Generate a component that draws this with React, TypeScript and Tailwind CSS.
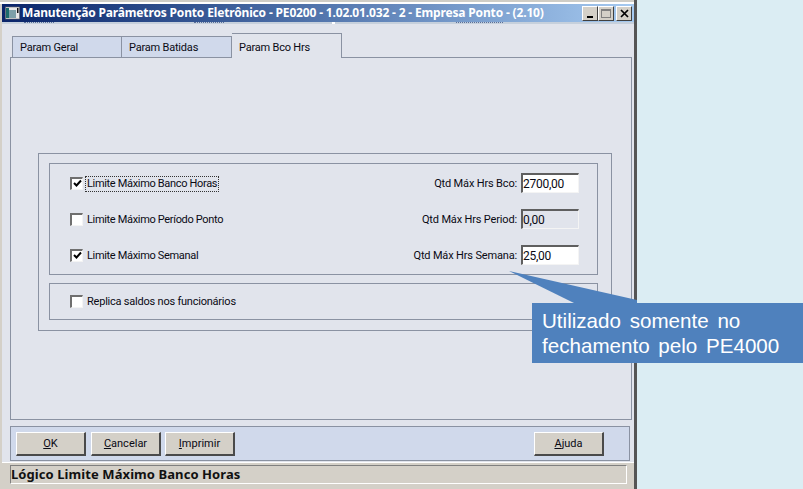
const ui = { fontFamily: 'Roboto, Tahoma, sans-serif' };
const bold = { fontFamily: '"Noto Sans", Tahoma, sans-serif' };

function Check({ checked }: { checked?: boolean }) {
  return (
    <span className="w-[13px] h-[13px] shrink-0 bg-white border-t-2 border-l-2 border-r border-b border-t-[#6f6f6f] border-l-[#6f6f6f] border-r-[#f4f4f4] border-b-[#f4f4f4] flex items-center justify-center">
      {checked && (
        <svg width="9" height="9" viewBox="0 0 9 9">
          <path d="M1 4 L3.5 6.5 L8 1.5" fill="none" stroke="#000" strokeWidth="2" />
        </svg>
      )}
    </span>
  );
}

function Row({ label, checked, focus, qty, value, disabled }: { label: string; checked?: boolean; focus?: boolean; qty: string; value: string; disabled?: boolean }) {
  return (
    <div className="flex items-center h-[20px]">
      <Check checked={checked} />
      <span className={`ml-[3px] mt-[2px] px-px leading-[14px] text-[11px] tracking-[-0.33px] text-[#0a0a14] ${focus ? 'outline-1 outline-dotted outline-[#333]' : ''}`}>{label}</span>
      <span className="ml-auto mt-[2px] text-[11px] tracking-[-0.16px] text-[#0a0a14] mr-[4px]">{qty}</span>
      <span className={`w-[58px] h-[20px] border-t-2 border-l-2 border-r border-b border-t-[#5f5f5f] border-l-[#5f5f5f] border-r-[#f4f4f4] border-b-[#f4f4f4] text-[12px] tracking-[-0.25px] leading-[19px] text-[#0a0a14] ${disabled ? 'bg-[#e1e4ec]' : 'bg-white'}`}>{value}</span>
    </div>
  );
}

function Btn({ children, className = '' }: { children: React.ReactNode; className?: string }) {
  return (
    <button className={`w-[70px] h-[24px] pt-[2px] bg-[#d4d0c8] border-t border-l border-t-white border-l-white border-r-2 border-b-2 border-r-[#4a4a4a] border-b-[#4a4a4a] text-[11px] text-[#0a0a14] flex items-center justify-center ${className}`}>
      {children}
    </button>
  );
}

function WinBtn({ children }: { children: React.ReactNode }) {
  return (
    <span className="w-[16px] h-[15px] bg-[#d4d0c8] border-t border-l border-t-white border-l-white border-r border-b border-r-[#404040] border-b-[#404040] flex items-center justify-center">
      {children}
    </span>
  );
}

export default function App() {
  return (
    <div className="relative w-[803px] h-[489px] overflow-hidden bg-[#dbedf3] flex" style={ui}>
      <div className="w-[637px] h-full flex flex-col border-r-[3px] border-r-[#555] bg-[#d4d0c8]">
        <div className="h-[4px] bg-white border-t-2 border-t-[#cfcdc6]" />
        <div className="flex-1 ml-[2px] flex flex-col bg-[#e1e4ec]">
          <div className="h-[18px] pl-[3px] pr-[2px] flex items-center bg-gradient-to-r from-[#0a246a] to-[#a6caf0]">
            <svg width="15" height="14" viewBox="0 0 15 14" className="shrink-0">
              <rect x="0.5" y="1" width="14" height="12" fill="#e8e8e8" stroke="#666" strokeWidth="0.6" />
              <rect x="1" y="2" width="3" height="10" fill="#1c6b6b" />
              <rect x="4" y="4" width="7" height="8" fill="#7da0a8" />
              <rect x="12" y="2" width="1.5" height="5" fill="#111" />
            </svg>
            <span className="ml-[2px] text-[12px] font-bold tracking-[-0.16px] text-white whitespace-nowrap" style={bold}>Manutenção Parâmetros Ponto Eletrônico - PE0200 - 1.02.01.032 - 2 - Empresa Ponto - (2.10)</span>
            <div className="ml-auto flex">
              <WinBtn><span className="w-[6px] h-[2px] bg-black mt-[8px]" /></WinBtn>
              <WinBtn><span className="w-[10px] h-[9px] border border-[#808080] border-t-2" /></WinBtn>
              <span className="w-[2px]" />
              <WinBtn>
                <svg width="9" height="9" viewBox="0 0 9 9"><path d="M1 1 L8 8 M8 1 L1 8" stroke="#000" strokeWidth="1.7" /></svg>
              </WinBtn>
            </div>
          </div>
          <div className="h-[2px] bg-[#c6d0dc] flex">
            <span className="ml-[22px] w-[30px] border-t border-dotted border-t-[#5a6f9a]" />
            <span className="ml-[140px] w-[30px] border-t border-dotted border-t-[#5a6f9a]" />
            <span className="ml-[108px] w-[3px] bg-white" />
            <span className="ml-[121px] w-[47px] border-t border-dotted border-t-[#5a6f9a]" />
          </div>
          <div className="flex-1 flex flex-col pl-[8px] pr-[2px]">
            <div className="h-[33px] pl-[2px] flex items-end text-[11px] tracking-[-0.2px] leading-[22px] text-[#0a0a14]">
              <div className="w-[110px] h-[21px] pl-[7px] bg-[#d0d9eb] border-t border-l border-r border-[#8a92a2]">Param Geral</div>
              <div className="w-[110px] h-[21px] pl-[7px] bg-[#d0d9eb] border-t border-r border-[#8a92a2]">Param Batidas</div>
              <div className="relative top-px z-10 w-[110px] h-[25px] pl-[7px] pt-[3px] bg-[#e1e4ec] border-t border-r border-[#8a92a2]">Param Bco Hrs</div>
            </div>
            <div className="h-[363px] border border-[#8a92a2] pt-[95px] pl-[27px] pr-[19px]">
              <div className="h-[178px] border border-[#8a92a2] pt-[9px] pl-[10px] pr-[13px]">
                <div className="h-[112px] border border-[#8a92a2] pl-[20px] pr-[18px] pt-[9px] flex flex-col gap-[16px]">
                  <Row label="Limite Máximo Banco Horas" checked focus qty="Qtd Máx Hrs Bco:" value="2700,00" />
                  <Row label="Limite Máximo Período Ponto" qty="Qtd Máx Hrs Period:" value="0,00" disabled />
                  <Row label="Limite Máximo Semanal" checked qty="Qtd Máx Hrs Semana:" value="25,00" />
                </div>
                <div className="mt-[8px] h-[37px] border border-[#8a92a2] pl-[20px] flex items-center">
                  <Check />
                  <span className="ml-[4px] mt-[2px] text-[11px] tracking-[-0.22px] text-[#0a0a14]">Replica saldos nos funcionários</span>
                </div>
              </div>
            </div>
            <div className="mt-[6px] w-[620px] h-[35px] border border-[#8a92a2] bg-[#d0d9eb] pl-[5px] pr-[25px] flex items-center gap-[4px]">
              <Btn><span className="underline">O</span>K</Btn>
              <Btn className="ml-px"><span><span className="underline">C</span>ancelar</span></Btn>
              <Btn><span><span className="underline">I</span>mprimir</span></Btn>
              <Btn className="ml-auto"><span><span className="underline">A</span>juda</span></Btn>
            </div>
          </div>
          <div className="h-[27px] mt-[1px] bg-[#d4d0c8] border-t border-t-white pl-[8px] pt-[2px]">
            <div className="w-[617px] h-[19px] border-t border-l border-t-[#808080] border-l-[#808080] border-r border-b border-r-white border-b-white text-[13px] font-bold leading-[17px] tracking-[0.08px] text-[#111]" style={bold}>Lógico Limite Máximo Banco Horas</div>
          </div>
        </div>
      </div>

      <svg className="absolute left-[505px] top-[268px]" width="136" height="38" viewBox="505 268 136 38">
        <polygon points="509,271 637,300 637,304 576,304" fill="#4f81bd" />
      </svg>
      <div className="absolute left-[532px] top-[303px] w-[271px] h-[60px] bg-[#4f81bd] pl-[10px] pt-[5px] text-[20.6px] leading-[25px] text-white [word-spacing:3px]" style={{ fontFamily: '"Liberation Sans", Arial, sans-serif' }}>
        Utilizado somente no<br />fechamento pelo PE4000
      </div>
    </div>
  );
}
